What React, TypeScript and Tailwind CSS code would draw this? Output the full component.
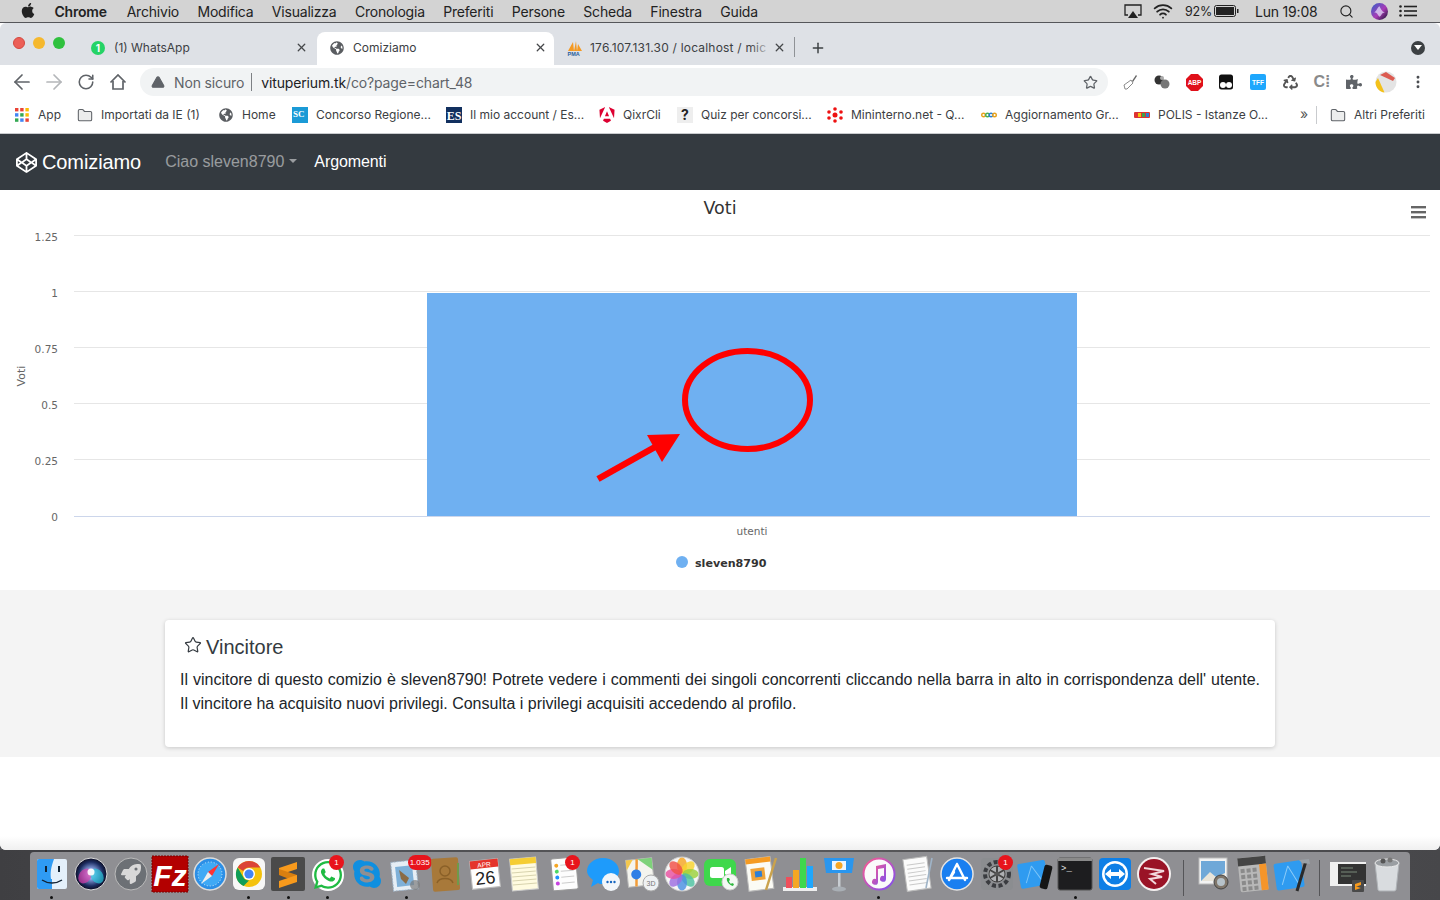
import { ReactNode } from 'react';
import {
  AlertTriangle,
  ArrowLeft,
  ArrowRight,
  Folder,
  MoreVertical,
  Plus,
  RotateCw,
  Search,
  Star,
  Wifi,
  X,
} from 'lucide-react';
import {
  FaApple,
  FaCodepen,
  FaGlobeAmericas,
  FaPuzzlePiece,
  FaRecycle,
  FaRocket,
  FaSkype,
  FaWhatsapp,
} from 'react-icons/fa';
import { SiAngular } from 'react-icons/si';

const menuItems = ['Archivio', 'Modifica', 'Visualizza', 'Cronologia', 'Preferiti', 'Persone', 'Scheda', 'Finestra', 'Guida'];

function MenuBar() {
  return (
    <div className="h-[23px] bg-[#d3d3d3] border-b border-[#55565a] flex items-center justify-between text-[14px] text-[#222] font-['Inter',sans-serif] tracking-[-0.2px]">
      <div className="flex items-center gap-[18.4px] pl-[20px]">
        <FaApple className="w-[16px] h-[17px] text-[#222] -mt-[2px]" />
        <span className="font-semibold mr-[1.5px]">Chrome</span>
        {menuItems.map((m) => (
          <span key={m}>{m}</span>
        ))}
      </div>
      <div className="flex items-center pr-[23px]">
        <svg width="18" height="15" viewBox="0 0 18 15" className="mr-[11px]">
          <path d="M4 11H1V1h16v10h-3" fill="none" stroke="#222" strokeWidth="1.3" />
          <path d="M9 7l5 7H4z" fill="#222" />
        </svg>
        <Wifi className="w-[20px] h-[20px] text-[#222] mr-[12px]" strokeWidth={2.2} />
        <span className="w-[25px] text-[12.5px] mr-[4px] mt-[2px] whitespace-nowrap">92%</span>
        <svg width="25" height="12" viewBox="0 0 25 12" className="mr-[16px]">
          <rect x="0.5" y="0.5" width="21" height="11" rx="2" fill="none" stroke="#222" />
          <rect x="2" y="2" width="18" height="8" fill="#222" />
          <rect x="23" y="4" width="1.5" height="4" fill="#222" />
        </svg>
        <span className="w-[64px] mr-[20px] whitespace-nowrap">Lun 19:08</span>
        <Search className="w-[15px] h-[15px] text-[#222] mr-[17px]" strokeWidth={1.8} />
        <svg width="17" height="17" viewBox="0 0 16 16" className="mr-[11px]">
          <defs>
            <linearGradient id="sirimini" x1="0" y1="0" x2="1" y2="1">
              <stop offset="0" stopColor="#2f62c9" />
              <stop offset="0.55" stopColor="#a93bb6" />
              <stop offset="1" stopColor="#11112a" />
            </linearGradient>
          </defs>
          <circle cx="8" cy="8" r="8" fill="url(#sirimini)" />
          <path d="M3 9c2-1 3-5 5-6 1 2 2 5 5 6-3 0-3 3-5 4-2-2-2-4-5-4z" fill="#e8e8ff" opacity="0.7" />
        </svg>
        <svg width="18" height="12" viewBox="0 0 18 12">
          <g fill="#222">
            <circle cx="1.5" cy="1.5" r="1.3" />
            <circle cx="1.5" cy="6" r="1.3" />
            <circle cx="1.5" cy="10.5" r="1.3" />
            <rect x="5" y="0.7" width="13" height="1.6" />
            <rect x="5" y="5.2" width="13" height="1.6" />
            <rect x="5" y="9.7" width="13" height="1.6" />
          </g>
        </svg>
      </div>
    </div>
  );
}

function WhatsappFavicon() {
  return (
    <span className="w-[14px] h-[14px] rounded-full bg-[#25d366] flex items-center justify-center text-white text-[10px] font-bold leading-none">1</span>
  );
}

function PmaFavicon() {
  return (
    <svg width="16" height="16" viewBox="0 0 16 16">
      <path d="M1 11L6 2l1 9zM7 11l2-10 1 10zM10 11l1-7 4 7z" fill="#f59a23" />
      <text x="0.5" y="15.5" fontSize="5.5" fontWeight="700" fill="#2a5d9c" fontFamily="Liberation Sans, sans-serif">PMA</text>
    </svg>
  );
}

function TabStrip() {
  return (
    <div className="h-[42px] bg-[#dee1e6] rounded-t-[6px] flex items-end text-[12px] text-[#3c4043] font-['Inter',sans-serif]">
      <div className="w-[85px] h-full flex items-center gap-[8px] pl-[13px] pb-[2px]">
        <span className="w-[12px] h-[12px] rounded-full bg-[#ec5f57] border-[0.5px] border-[#d4483f]" />
        <span className="w-[12px] h-[12px] rounded-full bg-[#f5b82e]" />
        <span className="w-[12px] h-[12px] rounded-full bg-[#2fc13e]" />
      </div>
      <div className="w-[232px] h-[33px] flex items-center pl-[6px] pr-[9px] pb-[2px]">
        <WhatsappFavicon />
        <span className="ml-[9px] flex-1 whitespace-nowrap">(1) WhatsApp</span>
        <X className="w-[13px] h-[13px] text-[#45474a]" strokeWidth={2.4} />
      </div>
      <div className="w-[237px] h-[33px] bg-white rounded-t-[8px] flex items-center pl-[13px] pr-[7px] pb-[2px]">
        <FaGlobeAmericas className="w-[14px] h-[14px] text-[#5a5d61]" />
        <span className="ml-[9px] flex-1 whitespace-nowrap">Comiziamo</span>
        <X className="w-[13px] h-[13px] text-[#45474a]" strokeWidth={2.4} />
      </div>
      <div className="w-[241px] h-[33px] flex items-center pl-[13px] pr-[9px] pb-[2px] relative">
        <PmaFavicon />
        <span className="ml-[7px] whitespace-nowrap tracking-[0.2px]">176.107.131.30 / localhost / mic</span>
        <span className="absolute left-[196px] top-0 h-full w-[22px] bg-gradient-to-r from-transparent to-[#dee1e6]" />
        <X className="ml-auto w-[13px] h-[13px] text-[#45474a]" strokeWidth={2.4} />
        <span className="absolute right-0 top-[5px] h-[20px] w-px bg-[#8f9296]" />
      </div>
      <div className="flex-1 h-[33px] flex items-center justify-between pl-[15px] pr-[15px] pb-[2px]">
        <Plus className="w-[16px] h-[16px] text-[#3c4043]" strokeWidth={2.2} />
        <span className="w-[14px] h-[14px] rounded-full bg-[#3c4043] flex items-center justify-center">
          <span className="w-0 h-0 border-l-[4px] border-r-[4px] border-t-[5px] border-l-transparent border-r-transparent border-t-white" />
        </span>
      </div>
    </div>
  );
}

function ExtCell({ children }: { children: ReactNode }) {
  return <span className="w-[32px] flex items-center justify-center shrink-0">{children}</span>;
}

function ExtensionIcons() {
  return (
    <div className="flex items-center pl-[6px]">
      <ExtCell>
        <svg width="16" height="16" viewBox="0 0 16 16">
          <path d="M3 15l-1-4 7-5 2 3-6 6z" fill="#fff" stroke="#8a8a8a" />
          <path d="M10 7l4-6 1 1-4 6z" fill="#666" />
        </svg>
      </ExtCell>
      <ExtCell>
        <svg width="18" height="16" viewBox="0 0 18 16">
          <circle cx="6" cy="6" r="4.5" fill="#333" />
          <circle cx="12" cy="10" r="4.5" fill="#777" />
          <circle cx="9" cy="4" r="2" fill="#aaa" />
        </svg>
      </ExtCell>
      <ExtCell>
        <svg width="17" height="17" viewBox="0 0 17 17">
          <path d="M5 0h7l5 5v7l-5 5H5l-5-5V5z" fill="#e0101a" />
          <text x="8.5" y="11" textAnchor="middle" fontSize="6.5" fontWeight="700" fill="#fff" fontFamily="Liberation Sans, sans-serif">ABP</text>
        </svg>
      </ExtCell>
      <ExtCell>
        <svg width="16" height="16" viewBox="0 0 16 16">
          <rect x="1" y="0.5" width="14" height="15" rx="2.5" fill="#111" />
          <circle cx="5" cy="11" r="3" fill="#fff" />
          <circle cx="11" cy="11" r="3" fill="#fff" />
        </svg>
      </ExtCell>
      <ExtCell>
        <svg width="16" height="16" viewBox="0 0 16 16">
          <rect width="16" height="16" rx="2" fill="#1ea7fd" />
          <text x="8" y="10.5" textAnchor="middle" fontSize="6.5" fontWeight="700" fill="#fff" fontFamily="Liberation Sans, sans-serif">TFF</text>
        </svg>
      </ExtCell>
      <ExtCell>
        <FaRecycle className="w-[15px] h-[15px] text-[#555]" />
      </ExtCell>
      <ExtCell>
        <span className="text-[16px] leading-none text-[#8a8a8a] font-['Liberation_Sans',sans-serif] font-bold">C⁞</span>
      </ExtCell>
      <ExtCell>
        <FaPuzzlePiece className="w-[16px] h-[16px] text-[#5f6368]" />
      </ExtCell>
      <ExtCell>
        <svg width="22" height="22" viewBox="0 0 22 22">
          <circle cx="11" cy="11" r="10.5" fill="#e4e4e4" />
          <path d="M3 7L0.5 11c0 6 4 10 9 10.5z" fill="#f3c11b" />
          <path d="M5 4l6-3 9 6-2 3z" fill="#d92d20" opacity="0.75" />
        </svg>
      </ExtCell>
      <ExtCell>
        <MoreVertical className="w-[16px] h-[16px] text-[#4a4d51]" strokeWidth={2.4} />
      </ExtCell>
    </div>
  );
}

function Toolbar() {
  return (
    <div className="h-[34px] bg-white flex items-center font-['Inter',sans-serif]">
      <div className="w-[140px] flex items-center pl-[6px]">
        <ExtCell>
          <ArrowLeft className="w-[24px] h-[24px] text-[#5f6368]" strokeWidth={1.7} />
        </ExtCell>
        <ExtCell>
          <ArrowRight className="w-[24px] h-[24px] text-[#b4b6b9]" strokeWidth={1.7} />
        </ExtCell>
        <ExtCell>
          <RotateCw className="w-[18px] h-[18px] text-[#5f6368]" strokeWidth={2.1} />
        </ExtCell>
        <ExtCell>
          <svg width="18" height="18" viewBox="0 0 18 18" fill="none" stroke="#5f6368" strokeWidth="1.7">
            <path d="M1.5 9.5L9 2l7.5 7.5" />
            <path d="M4 8v8h10V8" />
          </svg>
        </ExtCell>
      </div>
      <div className="w-[968px] h-[28px] rounded-full bg-[#f1f3f4] flex items-center pl-[11px] pr-[10px] text-[14px] tracking-[-0.14px]">
        <AlertTriangle className="w-[14px] h-[14px] text-[#5f6368] fill-[#5f6368] stroke-[#5f6368]" />
        <span className="ml-[9px] text-[#5f6368]">Non sicuro</span>
        <span className="w-px h-[18px] bg-[#7d8084] ml-[7px] mr-[9px]" />
        <span className="text-[#202124]">vituperium.tk</span>
        <span className="text-[#5f6368]">/co?page=chart_48</span>
        <Star className="ml-auto w-[15px] h-[15px] text-[#5f6368]" strokeWidth={2} />
      </div>
      <ExtensionIcons />
    </div>
  );
}

function Bookmark({ icon, label, className }: { icon: ReactNode; label: string; className: string }) {
  return (
    <div className={`flex items-center gap-[8px] shrink-0 ${className}`}>
      <span className="w-[16px] h-[16px] flex items-center justify-center shrink-0">{icon}</span>
      <span className="whitespace-nowrap">{label}</span>
    </div>
  );
}

function BookmarksBar() {
  return (
    <div className="h-[35px] bg-white border-b border-[#c9cbce] flex items-center pb-[2px] pl-[14px] text-[12px] text-[#3c4043] font-['Inter',sans-serif]">
      <Bookmark
        className="w-[63px]"
        label="App"
        icon={
          <svg width="14" height="14" viewBox="0 0 14 14">
            {[
              '#ea4335', '#ea4335', '#fbbc04',
              '#4285f4', '#34a853', '#fbbc04',
              '#34a853', '#4285f4', '#ea4335',
            ].map((c, i) => (
              <rect key={i} x={(i % 3) * 5.2} y={Math.floor(i / 3) * 5.2} width="3.4" height="3.4" fill={c} />
            ))}
          </svg>
        }
      />
      <Bookmark className="w-[141px]" label="Importati da IE (1)" icon={<Folder className="w-[17px] h-[17px] text-[#5f6368] fill-[#eceded]" strokeWidth={1.6} />} />
      <Bookmark className="w-[74px]" label="Home" icon={<FaGlobeAmericas className="w-[14px] h-[14px] text-[#5a5d61]" />} />
      <Bookmark
        className="w-[154px]"
        label="Concorso Regione..."
        icon={
          <svg width="16" height="16" viewBox="0 0 16 16">
            <rect width="16" height="16" fill="#1b9ad6" />
            <text x="1" y="10" fontSize="9" fontWeight="700" fill="#fff" fontFamily="Liberation Serif, serif">SC</text>
          </svg>
        }
      />
      <Bookmark
        className="w-[153px]"
        label="Il mio account / Es..."
        icon={
          <svg width="16" height="16" viewBox="0 0 16 16">
            <rect width="16" height="16" fill="#12305f" />
            <text x="8" y="12.5" textAnchor="middle" fontSize="12" fontWeight="700" fill="#fff" fontFamily="Liberation Serif, serif">ES</text>
          </svg>
        }
      />
      <Bookmark className="w-[78px]" label="QixrCli" icon={<SiAngular className="w-[16px] h-[16px] text-[#dd0031]" />} />
      <Bookmark
        className="w-[150px]"
        label="Quiz per concorsi..."
        icon={<span className="w-[16px] h-[16px] bg-[#eee] text-[#222] font-bold text-[14px] leading-[16px] text-center">?</span>}
      />
      <Bookmark
        className="w-[154px]"
        label="Mininterno.net - Q..."
        icon={
          <svg width="16" height="16" viewBox="0 0 16 16" fill="#ee1111">
            <circle cx="8" cy="8" r="2.5" />
            <circle cx="8" cy="2" r="1.8" />
            <circle cx="8" cy="14" r="1.8" />
            <circle cx="2" cy="5" r="1.8" />
            <circle cx="14" cy="5" r="1.8" />
            <circle cx="2" cy="11" r="1.8" />
            <circle cx="14" cy="11" r="1.8" />
          </svg>
        }
      />
      <Bookmark
        className="w-[153px]"
        label="Aggiornamento Gr..."
        icon={
          <svg width="16" height="8" viewBox="0 0 16 8" fill="none" strokeWidth="1.4">
            <circle cx="2.5" cy="4" r="1.8" stroke="#e8a21b" />
            <circle cx="6.5" cy="4" r="1.8" stroke="#4caf50" />
            <circle cx="10" cy="4" r="1.8" stroke="#2a7fd5" />
            <circle cx="13.5" cy="4" r="1.8" stroke="#e8a21b" />
          </svg>
        }
      />
      <Bookmark
        className="w-[166px]"
        label="POLIS - Istanze O..."
        icon={
          <svg width="16" height="6" viewBox="0 0 16 6">
            <rect width="16" height="6" rx="1" fill="#d33" />
            <rect x="4" y="1" width="3" height="4" fill="#f4c20d" />
            <rect x="8" y="1" width="3" height="4" fill="#3fa34d" />
            <rect x="12" y="1" width="3" height="4" fill="#2a7fd5" />
          </svg>
        }
      />
      <span className="w-[12px] text-[#555] text-[14px] leading-none -mt-[2px]">»</span>
      <span className="w-px h-[18px] bg-[#c9cbce] ml-[4px] mr-[13px]" />
      <Bookmark className="" label="Altri Preferiti" icon={<Folder className="w-[17px] h-[17px] text-[#5f6368] fill-[#eceded]" strokeWidth={1.6} />} />
    </div>
  );
}

function Navbar() {
  return (
    <nav className="h-[56px] bg-[#343a40] flex items-center pl-[16px] font-['Liberation_Sans',sans-serif]">
      <FaCodepen className="w-[21px] h-[21px] text-white" />
      <span className="ml-[5px] text-[20px] text-white tracking-[-0.1px] -mt-[1px]">Comiziamo</span>
      <span className="ml-[24px] text-[16px] text-white/50">Ciao sleven8790</span>
      <span className="ml-[5px] w-0 h-0 border-l-[4.8px] border-r-[4.8px] border-t-[4.8px] border-l-transparent border-r-transparent border-t-white/50 -mt-[3px]" />
      <span className="ml-[17px] text-[16px] text-white tracking-[-0.1px]">Argomenti</span>
    </nav>
  );
}

function VotiChart() {
  const grid = [
    { y: 46, label: '1.25' },
    { y: 102, label: '1' },
    { y: 158, label: '0.75' },
    { y: 214, label: '0.5' },
    { y: 270, label: '0.25' },
  ];
  const chartFont = 'Lucida Grande, DejaVu Sans, sans-serif';
  return (
    <div className="h-[400px] bg-white">
      <svg width="1440" height="400" viewBox="0 0 1440 400" className="block" fontFamily={chartFont}>
        <text x="720" y="24" textAnchor="middle" fontSize="17.5" fill="#333">Voti</text>
        <g fill="#666" stroke="none">
          <rect x="1411" y="16" width="15" height="2.4" />
          <rect x="1411" y="21" width="15" height="2.4" />
          <rect x="1411" y="26" width="15" height="2.4" />
        </g>
        {grid.map((g) => (
          <g key={g.label}>
            <line x1="74" x2="1430" y1={g.y - 0.5} y2={g.y - 0.5} stroke="#e6e6e6" />
            <text x="58" y={g.y + 5} textAnchor="end" fontSize="10.5" fill="#666">{g.label}</text>
          </g>
        ))}
        <line x1="74" x2="1430" y1="326.5" y2="326.5" stroke="#ccd6eb" />
        <text x="58" y="331" textAnchor="end" fontSize="10.5" fill="#666">0</text>
        <text transform="translate(25 186) rotate(-90)" textAnchor="middle" fontSize="11" fill="#666">Voti</text>
        <rect x="427" y="103" width="650" height="223" fill="#6fb0f1" />
        <ellipse cx="747.5" cy="210" rx="62.5" ry="49" fill="none" stroke="#ff0000" strokeWidth="6" />
        <line x1="598" y1="289" x2="655" y2="257" stroke="#ff0000" strokeWidth="6.5" />
        <polygon points="647,245 680,244 662,272" fill="#ff0000" />
        <text x="752" y="345" textAnchor="middle" fontSize="10.5" fill="#666">utenti</text>
        <circle cx="682" cy="372" r="6" fill="#6fb0f1" />
        <text x="695" y="377" fontSize="11.1" fontWeight="700" fill="#333">sleven8790</text>
      </svg>
    </div>
  );
}

function WinnerCard() {
  return (
    <section className="bg-[#f4f4f4] pt-[30px] pb-[10px] font-['Liberation_Sans',sans-serif]">
      <div className="mx-auto w-[1110px] h-[127px] bg-white rounded-[4px] shadow-[0_1px_4px_rgba(0,0,0,0.18)] px-[15px] pt-[15px]">
        <div className="flex items-center pl-[4px] text-[20px] leading-[24px] text-[#343a40]">
          <Star className="w-[18px] h-[18px] -mt-[4px]" strokeWidth={1.6} />
          <span className="ml-[4px]">Vincitore</span>
        </div>
        <p className="mt-[9px] text-[16px] leading-[24px] text-[#212529] text-justify">
          Il vincitore di questo comizio è sleven8790! Potrete vedere i commenti dei singoli concorrenti cliccando nella barra in alto in corrispondenza dell' utente. Il vincitore ha acquisito nuovi privilegi. Consulta i privilegi acquisiti accedendo al profilo.
        </p>
      </div>
    </section>
  );
}

function Tile({ children }: { children: ReactNode }) {
  return (
    <svg width="38" height="38" viewBox="0 0 38 38" className="block">
      {children}
    </svg>
  );
}

const font = 'Liberation Sans, sans-serif';

// simplified dock icons, one per app
const dockIcons: Record<string, ReactNode> = {
  finder: (
    <Tile>
      <rect x="4" y="4" width="30" height="30" rx="2" fill="#e4f0fb" />
      <path d="M4 6a2 2 0 012-2h15c-3 8-4 14-3 20h1v10H6a2 2 0 01-2-2z" fill="#2f9bf4" />
      <rect x="12" y="11" width="2" height="6" fill="#123" />
      <rect x="25" y="11" width="2" height="6" fill="#123" />
      <path d="M9 25c6 4 14 4 20 0" fill="none" stroke="#123" strokeWidth="1.4" />
    </Tile>
  ),
  siri: (
    <Tile>
      <defs>
        <radialGradient id="siriDock">
          <stop offset="0" stopColor="#fff" />
          <stop offset="0.3" stopColor="#8fa8e8" />
          <stop offset="0.75" stopColor="#1c2c60" />
          <stop offset="1" stopColor="#0c0c20" />
        </radialGradient>
      </defs>
      <circle cx="19" cy="19" r="16" fill="url(#siriDock)" stroke="#ddd" />
      <ellipse cx="13" cy="21" rx="6" ry="8" fill="#d83fa8" opacity="0.7" transform="rotate(35 13 21)" />
      <ellipse cx="25" cy="21" rx="6" ry="8" fill="#29c3d8" opacity="0.7" transform="rotate(-35 25 21)" />
      <circle cx="19" cy="17" r="3.5" fill="#fff" opacity="0.9" />
    </Tile>
  ),
  launchpad: (
    <Tile>
      <circle cx="19" cy="19" r="16" fill="#6c7075" stroke="#bbb" />
      <foreignObject x="9" y="9" width="20" height="20">
        <FaRocket className="w-[20px] h-[20px] text-[#d8d8d8]" />
      </foreignObject>
    </Tile>
  ),
  filezilla: (
    <Tile>
      <rect x="1" y="1" width="36" height="36" fill="#b30000" stroke="#7a0000" strokeDasharray="2 1" />
      <text x="19" y="31" textAnchor="middle" fontSize="30" fontWeight="700" fontStyle="italic" fill="#fff" fontFamily={font}>Fz</text>
    </Tile>
  ),
  safari: (
    <Tile>
      <circle cx="19" cy="19" r="16" fill="#2c8fe6" stroke="#ddd" strokeWidth="1.5" />
      <circle cx="19" cy="19" r="12" fill="#3fa9f5" stroke="#cfe8fb" strokeDasharray="1 2" />
      <polygon points="28,9 21,21 17,17" fill="#f33" />
      <polygon points="10,29 21,21 17,17" fill="#eee" />
    </Tile>
  ),
  chrome: (
    <Tile>
      <rect x="3" y="3" width="32" height="32" rx="6" fill="#f7f7f7" />
      <circle cx="19" cy="19" r="13" fill="#f4c20d" />
      <path d="M19 6a13 13 0 0111.3 6.5H19a6.5 6.5 0 00-5.8 3.5L7.7 12.5A13 13 0 0119 6z" fill="#db4437" />
      <path d="M7.7 12.5l5.6 9.7a6.5 6.5 0 005.7 3.3L13.5 31A13 13 0 017.7 12.5z" fill="#0f9d58" />
      <circle cx="19" cy="19" r="6" fill="#fff" />
      <circle cx="19" cy="19" r="4.6" fill="#4285f4" />
    </Tile>
  ),
  sublime: (
    <Tile>
      <rect x="2" y="2" width="34" height="34" rx="2" fill="#4a4a4a" />
      <polygon points="28,7 10,13 10,20 28,14" fill="#f89a1c" />
      <polygon points="10,14 28,20 28,27 10,20" fill="#d97f10" />
      <polygon points="28,20 10,26 10,33 28,27" fill="#f89a1c" />
    </Tile>
  ),
  whatsapp: (
    <Tile>
      <circle cx="19" cy="20" r="16" fill="#fff" />
      <foreignObject x="3" y="4" width="32" height="32">
        <FaWhatsapp className="w-[32px] h-[32px] text-[#1fbb43]" />
      </foreignObject>
    </Tile>
  ),
  skype: (
    <Tile>
      <foreignObject x="3" y="3" width="32" height="32">
        <FaSkype className="w-[32px] h-[32px] text-[#0f8fe0]" />
      </foreignObject>
    </Tile>
  ),
  mail: (
    <Tile>
      <rect x="5" y="6" width="25" height="29" fill="#e6eef5" stroke="#9db2c6" strokeDasharray="2 1" transform="rotate(-6 18 20)" />
      <rect x="9" y="11" width="17" height="20" fill="#7eb0d8" transform="rotate(-6 18 20)" />
      <path d="M12 15l10 8-3 6-5-5z" fill="#8a6b45" />
      <circle cx="28" cy="30" r="5" fill="#7a7a7a" opacity="0.7" />
    </Tile>
  ),
  contacts: (
    <Tile>
      <rect x="5" y="3" width="27" height="33" rx="2" fill="#a8793a" transform="rotate(-4 18 19)" />
      <rect x="30" y="8" width="2" height="22" fill="#6f9a4a" />
      <circle cx="18" cy="16" r="5" fill="none" stroke="#8a6028" strokeWidth="1.5" />
      <path d="M10 28c2-6 14-6 16 0" fill="none" stroke="#8a6028" strokeWidth="1.5" />
    </Tile>
  ),
  calendar: (
    <Tile>
      <g transform="rotate(-6 19 19)">
        <rect x="5" y="5" width="28" height="28" fill="#fff" stroke="#bbb" />
        <rect x="5" y="5" width="28" height="8" fill="#e5342b" />
        <text x="19" y="12" textAnchor="middle" fontSize="6.5" fill="#fff" fontFamily={font}>APR</text>
        <text x="19" y="29" textAnchor="middle" fontSize="18" fill="#222" fontFamily={font}>26</text>
      </g>
    </Tile>
  ),
  notes: (
    <Tile>
      <g transform="rotate(-5 19 19)">
        <rect x="6" y="3" width="26" height="32" fill="#fffbe0" stroke="#ccc" />
        <rect x="6" y="3" width="26" height="6" fill="#f5cd33" />
        {[13, 17, 21, 25, 29].map((y) => (
          <line key={y} x1="7" x2="31" y1={y} y2={y} stroke="#d8d3ae" />
        ))}
      </g>
    </Tile>
  ),
  reminders: (
    <Tile>
      <g transform="rotate(-5 19 19)">
        <rect x="7" y="3" width="25" height="32" rx="1.5" fill="#fdfdfd" stroke="#999" />
        <circle cx="12" cy="10" r="2" fill="#f5a623" />
        <circle cx="12" cy="16" r="2" fill="#4cd964" />
        <circle cx="12" cy="22" r="2" fill="#1e90ff" />
        <circle cx="12" cy="28" r="2" fill="#c642e0" />
        {[10, 16, 22, 28].map((y) => (
          <line key={y} x1="16" x2="29" y1={y} y2={y} stroke="#ccc" />
        ))}
      </g>
    </Tile>
  ),
  messages: (
    <Tile>
      <path d="M19 3c9 0 16 6 16 13s-7 13-16 13c-2 0-4 0-5-1l-7 4 2-7C5 22 3 19 3 16 3 9 10 3 19 3z" fill="#1e9bfb" />
      <circle cx="27" cy="27" r="9" fill="#f2f6fa" />
      <circle cx="23.5" cy="27" r="1.2" fill="#1565c0" />
      <circle cx="27" cy="27" r="1.2" fill="#1565c0" />
      <circle cx="30.5" cy="27" r="1.2" fill="#1565c0" />
    </Tile>
  ),
  maps: (
    <Tile>
      <g transform="rotate(-6 17 17)">
        <rect x="4" y="4" width="26" height="27" fill="#f4f4ee" stroke="#bbb" />
        <path d="M16 4h14v12z" fill="#7ed27a" />
        <path d="M4 4h7l-7 10z" fill="#f5c84c" />
        <path d="M15 4l-3 27" stroke="#f29c38" strokeWidth="2.5" />
        <circle cx="13" cy="19" r="5" fill="#2f7fe6" />
      </g>
      <circle cx="28" cy="28" r="8" fill="#eef1f3" stroke="#aaa" />
      <text x="28" y="31" textAnchor="middle" fontSize="7" fill="#777" fontFamily={font}>3D</text>
    </Tile>
  ),
  photos: (
    <Tile>
      <circle cx="19" cy="19" r="17" fill="#f6f6f6" stroke="#ccc" />
      {[
        ['#f5a623', 0],
        ['#f8d32d', 45],
        ['#9bd13a', 90],
        ['#4cc2a0', 135],
        ['#4a90e2', 180],
        ['#9c6ee0', 225],
        ['#e84fa0', 270],
        ['#f04f45', 315],
      ].map(([c, a]) => (
        <ellipse key={a as number} cx="19" cy="10.5" rx="5" ry="8" fill={c as string} opacity="0.82" transform={`rotate(${a} 19 19)`} />
      ))}
    </Tile>
  ),
  facetime: (
    <Tile>
      <rect x="2" y="4" width="32" height="27" rx="6" fill="#3fd84c" />
      <rect x="8" y="12" width="14" height="11" rx="2.5" fill="#fff" />
      <path d="M23 16l6-4v11l-6-4z" fill="#fff" />
      <circle cx="28" cy="27" r="8" fill="#f4f8f4" stroke="#ccc" />
      <path d="M25 23c-1 3 2 7 6 8l1-2-2-1-1 1c-1-1-2-2-2-3l1-1-1-2z" fill="#2eb83f" />
    </Tile>
  ),
  pages: (
    <Tile>
      <g transform="rotate(-7 17 19)">
        <rect x="5" y="3" width="25" height="32" fill="#fbfbf5" stroke="#bbb" />
        <rect x="5" y="3" width="25" height="5" fill="#f59b23" />
        <rect x="9" y="13" width="14" height="12" fill="#f0a43a" />
        <rect x="13" y="16" width="7" height="6" fill="#2d7fd5" />
      </g>
      <line x1="34" y1="3" x2="24" y2="35" stroke="#caa24d" strokeWidth="2.5" />
    </Tile>
  ),
  numbers: (
    <Tile>
      <rect x="2" y="32" width="34" height="4" fill="#eee" />
      <rect x="5" y="22" width="6" height="11" fill="#f04f5b" />
      <rect x="12" y="15" width="6" height="18" fill="#f5a623" />
      <rect x="19" y="3" width="6" height="30" fill="#3fd84c" />
      <rect x="26" y="11" width="6" height="22" fill="#1ea7fd" />
    </Tile>
  ),
  keynote: (
    <Tile>
      <path d="M4 3h30l-2 15H6z" fill="#2a96ee" />
      <rect x="12" y="6" width="14" height="9" fill="#eef6fc" />
      <circle cx="19" cy="10.5" r="3.5" fill="#f5a623" />
      <rect x="18" y="18" width="2.5" height="15" fill="#c8cdd2" />
      <ellipse cx="19" cy="34" rx="7" ry="2.5" fill="#a9afb5" />
    </Tile>
  ),
  itunes: (
    <Tile>
      <defs>
        <linearGradient id="itunesRing" x1="0" y1="0" x2="1" y2="1">
          <stop offset="0" stopColor="#fa5a8f" />
          <stop offset="1" stopColor="#7d4ff0" />
        </linearGradient>
      </defs>
      <circle cx="19" cy="19" r="15.5" fill="#fafafa" stroke="url(#itunesRing)" strokeWidth="2" />
      <path d="M16 11l10-2v15a3 3 0 11-2-3V13l-6 1v13a3 3 0 11-2-3z" fill="url(#itunesRing)" />
    </Tile>
  ),
  textedit: (
    <Tile>
      <g transform="rotate(-8 17 19)">
        <rect x="6" y="3" width="24" height="32" fill="#fbfbfb" stroke="#bbb" />
        {[9, 13, 17, 21, 25, 29].map((y) => (
          <line key={y} x1="9" x2="27" y1={y} y2={y} stroke="#c9c9c9" />
        ))}
      </g>
      <line x1="33" y1="3" x2="27" y2="33" stroke="#9fb4c8" strokeWidth="1.6" />
    </Tile>
  ),
  appstore: (
    <Tile>
      <circle cx="19" cy="19" r="16" fill="#1a7ff0" stroke="#e4e4e4" strokeWidth="1.5" />
      <path d="M19 9L11 25M19 9l8 16M9 23h20M16 17l-5 8" fill="none" stroke="#fff" strokeWidth="2.4" strokeLinecap="round" />
    </Tile>
  ),
  prefs: (
    <Tile>
      <rect x="3" y="3" width="32" height="32" rx="4" fill="#8b8d90" />
      <circle cx="19" cy="19" r="12" fill="none" stroke="#3a3c40" strokeWidth="4" strokeDasharray="4 2.6" />
      <circle cx="19" cy="19" r="8" fill="#aeb0b3" stroke="#444" />
      <path d="M19 11v16M12 15l14 8M26 15l-14 8" stroke="#444" strokeWidth="2" />
      <circle cx="19" cy="19" r="2.5" fill="#555" />
    </Tile>
  ),
  simulator: (
    <Tile>
      <g transform="rotate(-10 15 20)">
        <rect x="2" y="7" width="28" height="25" rx="2" fill="#2f9bf0" />
        <path d="M16 11l-8 16M16 11l8 16" stroke="#7cc4f7" strokeWidth="1" />
      </g>
      <rect x="25" y="10" width="8" height="24" rx="2" fill="#151515" transform="rotate(14 29 22)" />
    </Tile>
  ),
  terminal: (
    <Tile>
      <rect x="2" y="3" width="34" height="32" rx="2" fill="#1d1d1f" stroke="#555" />
      <rect x="2" y="3" width="34" height="3" fill="#8a8a8a" />
      <text x="5" y="16" fontSize="9" fill="#e8e8e8" fontFamily="Liberation Mono, monospace">{'>_'}</text>
    </Tile>
  ),
  teamviewer: (
    <Tile>
      <rect x="3" y="3" width="32" height="32" rx="4" fill="#0e7fe6" />
      <circle cx="19" cy="19" r="13" fill="#fff" />
      <circle cx="19" cy="19" r="10.5" fill="#0e7fe6" />
      <path d="M9 19l6-5v3h8v-3l6 5-6 5v-3h-8v3z" fill="#fff" />
    </Tile>
  ),
  maroon: (
    <Tile>
      <circle cx="19" cy="19" r="17" fill="#f4f0f0" />
      <circle cx="19" cy="19" r="15" fill="#9a1326" />
      <path d="M9 13l20 3-12 3 10 3-12 2 6 5" fill="none" stroke="#f2d9dc" strokeWidth="2" />
    </Tile>
  ),
  preview: (
    <Tile>
      <rect x="5" y="3" width="28" height="26" fill="#f3f3f3" stroke="#bbb" />
      <rect x="7" y="6" width="24" height="20" fill="#6fa8d8" />
      <path d="M7 26l9-9 6 5 9-4v8z" fill="#e9e4d8" />
      <circle cx="27" cy="27" r="7" fill="#80766a" stroke="#444" />
      <circle cx="27" cy="27" r="4" fill="#b6c2c9" />
    </Tile>
  ),
  calculator: (
    <Tile>
      <g transform="rotate(-6 19 19)">
        <rect x="5" y="2" width="28" height="34" rx="2" fill="#b8b8b8" />
        <rect x="5" y="2" width="28" height="8" fill="#444" />
        <rect x="26" y="10" width="7" height="26" fill="#f5952a" />
        {[13, 19, 25, 31].map((y) =>
          [7, 13, 19].map((x) => <rect key={`${x}-${y}`} x={x} y={y} width="4" height="4" fill="#8a8a8a" />),
        )}
      </g>
    </Tile>
  ),
  xcode: (
    <Tile>
      <g transform="rotate(-8 15 20)">
        <rect x="2" y="7" width="28" height="27" rx="2" fill="#2f9bf0" />
        <path d="M16 11l-8 18M16 11l8 18" stroke="#8ccbf8" strokeWidth="1" />
      </g>
      <line x1="33" y1="6" x2="24" y2="36" stroke="#2a2a2a" strokeWidth="3" />
      <path d="M26 5l10-1 1 5-8-1z" fill="#9aa0a6" />
    </Tile>
  ),
  doc: (
    <Tile>
      <rect x="1" y="7" width="36" height="24" fill="#f0f0f0" />
      <rect x="9" y="9" width="28" height="20" fill="#333" />
      <g stroke="#7a8a7a">
        <line x1="12" x2="24" y1="13" y2="13" />
        <line x1="12" x2="28" y1="17" y2="17" />
        <line x1="12" x2="22" y1="21" y2="21" />
      </g>
      <rect x="23" y="25" width="12" height="12" rx="1" fill="#4a4a4a" />
      <path d="M32 27v3l-6 2v-3zM26 31l6 2-6 2z" fill="#f89a1c" />
    </Tile>
  ),
  trash: (
    <Tile>
      <path d="M7 8h24l-3 27a2 2 0 01-2 1H12a2 2 0 01-2-1z" fill="#d9dcdf" stroke="#aeb2b6" />
      <ellipse cx="19" cy="8" rx="12" ry="4" fill="#9a9ea2" stroke="#e8e8e8" />
      <circle cx="15" cy="6" r="2.5" fill="#555" />
      <circle cx="22" cy="5" r="2.5" fill="#777" />
    </Tile>
  ),
};

type DockItem = { id: string; dot?: boolean; badge?: string } | 'sep' | 'sep-narrow';

const dockItems: DockItem[] = [
  { id: 'finder', dot: true },
  { id: 'siri' },
  { id: 'launchpad' },
  { id: 'filezilla' },
  { id: 'safari' },
  { id: 'chrome', dot: true },
  { id: 'sublime', dot: true },
  { id: 'whatsapp', dot: true, badge: '1' },
  { id: 'skype' },
  { id: 'mail', dot: true, badge: '1.035' },
  { id: 'contacts' },
  { id: 'calendar' },
  { id: 'notes' },
  { id: 'reminders', badge: '1' },
  { id: 'messages' },
  { id: 'maps' },
  { id: 'photos' },
  { id: 'facetime' },
  { id: 'pages' },
  { id: 'numbers' },
  { id: 'keynote' },
  { id: 'itunes', dot: true },
  { id: 'textedit' },
  { id: 'appstore' },
  { id: 'prefs', badge: '1' },
  { id: 'simulator' },
  { id: 'terminal', dot: true },
  { id: 'teamviewer' },
  { id: 'maroon' },
  'sep',
  { id: 'preview' },
  { id: 'calculator' },
  { id: 'xcode' },
  'sep-narrow',
  { id: 'doc' },
  { id: 'trash' },
];

function Dock() {
  return (
    <div className="h-[50px] bg-gradient-to-r from-[#3f3f42] via-[#5a5a5d] to-[#47474a] pl-[30px] pr-[30px] pt-[2px]">
      <div className="h-[48px] bg-[#8f8f93] rounded-t-[4px] flex items-start pl-[2.4px] pt-[3px]">
        {dockItems.map((item, i) =>
          typeof item === 'string' ? (
            <span key={i} className={`h-[36px] mt-[5px] flex justify-center shrink-0 ${item === 'sep' ? 'w-[20px]' : 'w-[16px]'}`}>
              <span className="w-px h-full bg-[#555558]" />
            </span>
          ) : (
            <div key={item.id} className="relative w-[39.36px] h-[45px] flex justify-center shrink-0">
              {dockIcons[item.id]}
              {item.badge && (
                <span className="absolute top-0 left-[21px] min-w-[15px] h-[15px] px-[2px] rounded-full bg-[#e8141c] text-white text-[8px] leading-[15px] text-center font-['Liberation_Sans',sans-serif]">
                  {item.badge}
                </span>
              )}
              {item.dot && <span className="absolute bottom-[1px] left-[18px] w-[3px] h-[3px] rounded-full bg-[#111]" />}
            </div>
          ),
        )}
      </div>
    </div>
  );
}

export default function App() {
  return (
    <div className="w-[1440px] h-[900px] overflow-hidden bg-[#55565a] flex flex-col">
      <MenuBar />
      <div className="h-[827px] bg-white rounded-b-[6px] overflow-hidden shrink-0 flex flex-col">
        <TabStrip />
        <Toolbar />
        <BookmarksBar />
        <Navbar />
        <VotiChart />
        <WinnerCard />
        <div className="flex-1 bg-gradient-to-b from-white via-white via-85% to-[#f0f0f0]" />
      </div>
      <Dock />
    </div>
  );
}
